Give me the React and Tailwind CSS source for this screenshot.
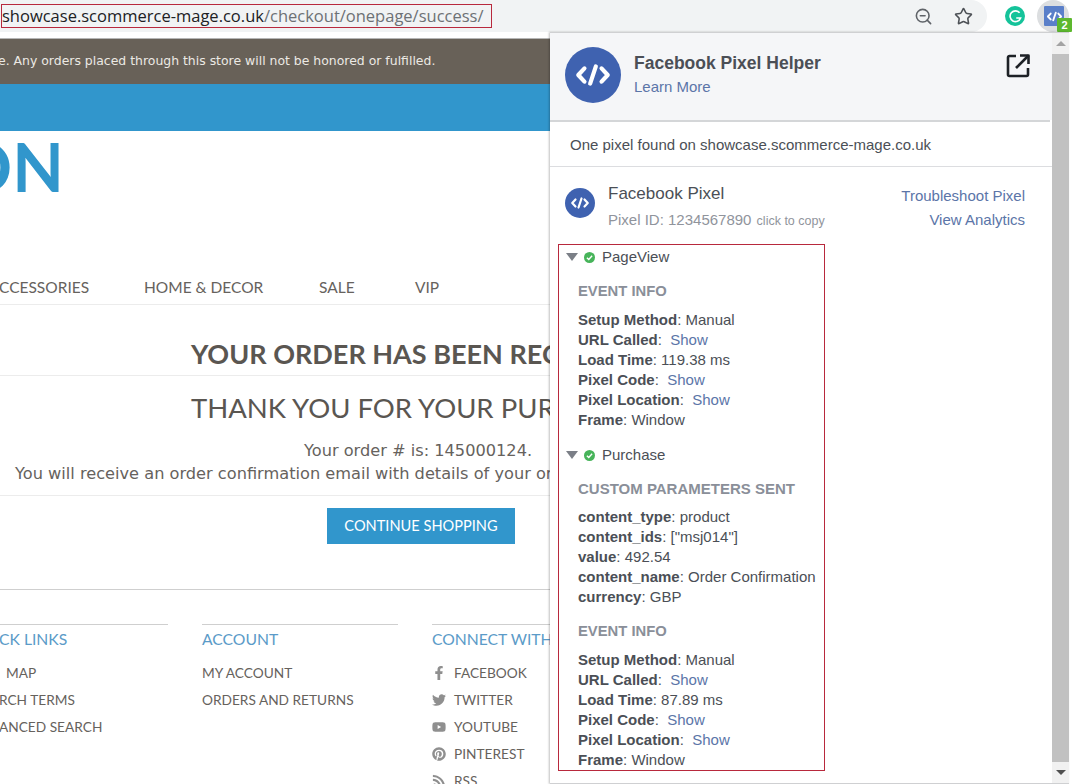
import { Star, ZoomOut } from 'lucide-react';
import { FaFacebookF, FaPinterest, FaRss, FaTwitter, FaYoutube } from 'react-icons/fa';

const HEAD = "font-['Lato',sans-serif]";
const BODY = "font-['DejaVu_Sans',sans-serif]";
const UI = "font-['Liberation_Sans',Arial,sans-serif]";

const SOCIAL = [
  { label: 'FACEBOOK', Icon: FaFacebookF },
  { label: 'TWITTER', Icon: FaTwitter },
  { label: 'YOUTUBE', Icon: FaYoutube },
  { label: 'PINTEREST', Icon: FaPinterest },
  { label: 'RSS', Icon: FaRss },
];

function CodeMark({ className }) {
  return (
    <svg viewBox="0 0 40 40" className={className} fill="none" stroke="white" strokeWidth="4.4" strokeLinecap="round" strokeLinejoin="round">
      <path d="M11 13 L4.5 20 L11 27" />
      <path d="M29 13 L35.5 20 L29 27" />
      <path d="M23 11 L17 29" />
    </svg>
  );
}

function Row({ name, value, show }) {
  return (
    <div className="h-5 leading-5 whitespace-nowrap">
      <span className="font-bold">{name}</span>
      {show ? <span>:&nbsp; <span className="text-[#5b75a8]">Show</span></span> : <span>: {value}</span>}
    </div>
  );
}

function EventInfo({ time }) {
  return (
    <div>
      <h4 className="h-5 leading-5 text-[14.8px] font-bold text-[#8a8f99]">EVENT INFO</h4>
      <div className="mt-[9px]">
        <Row name="Setup Method" value="Manual" />
        <Row name="URL Called" show />
        <Row name="Load Time" value={time} />
        <Row name="Pixel Code" show />
        <Row name="Pixel Location" show />
        <Row name="Frame" value="Window" />
      </div>
    </div>
  );
}

function EventHead({ name }) {
  return (
    <div className="flex items-center h-5 leading-5">
      <span className="w-0 h-0 ml-[7px] border-x-[6.5px] border-x-transparent border-t-[8px] border-t-[#7b7f87]" />
      <span className="ml-[6px] w-[11px] h-[11px] rounded-full bg-[#47b45a] flex items-center justify-center">
        <svg viewBox="0 0 12 12" className="w-[9px] h-[9px]" fill="none" stroke="white" strokeWidth="1.8"><path d="M2.5 6.2 L5 8.6 L9.5 3.6" /></svg>
      </span>
      <span className="ml-[7px] text-[#4b4f56]">{name}</span>
    </div>
  );
}

function Toolbar() {
  return (
    <div className="h-8 bg-white flex items-center">
      <div className="w-[987px] h-8 bg-[#f1f3f4] rounded-r-[16px] flex items-center">
        <div className="ml-px h-6 w-[491px] border border-[#b8293d] flex items-center text-[16.5px] whitespace-nowrap font-['Open_Sans',sans-serif] leading-none">
          <span className="text-[#202124]">showcase.scommerce-mage.co.uk</span>
          <span className="text-[#6d7175]">/checkout/onepage/success/</span>
        </div>
        <div className="ml-auto mr-[14px] flex items-center gap-[21px]">
          <ZoomOut className="w-[19px] h-[19px] text-[#5f6368]" strokeWidth={2} />
          <Star className="w-[19px] h-[19px] text-[#4d5156]" strokeWidth={2} />
        </div>
      </div>
      <div className="ml-[18px] w-5 h-5 rounded-full bg-[#15c39a] flex items-center justify-center">
        <svg viewBox="0 0 20 20" className="w-[15px] h-[15px]" fill="none" stroke="white" strokeWidth="2.2"><path d="M15.5 5 A7.2 7.2 0 1 0 16.8 12 L11 12" /></svg>
      </div>
      <div className="ml-3 relative w-8 h-8 rounded-full bg-[#dcdee0] flex items-center justify-center">
        <div className="ml-[2px] w-5 h-5 bg-[#5a7fc9] rounded-[1px] flex items-center justify-center">
          <CodeMark className="w-[17px] h-[17px]" />
        </div>
        <span className={`absolute right-[-3px] bottom-0 w-[15px] h-[14px] bg-[#5db82e] text-white text-[11px] font-bold leading-[14px] text-center rounded-[1px] ${UI}`}>2</span>
      </div>
    </div>
  );
}

function StorePage() {
  return (
    <div className="w-[550px] overflow-hidden">
      <div className="h-[7px] bg-white border-b border-[#b5b5b5]" />
      <div className={`h-[45px] bg-[#686158] flex items-center whitespace-nowrap text-[12.45px] text-[#ece9e4] -ml-[2px] ${BODY}`}>
        e. Any orders placed through this store will not be honored or fulfilled.
      </div>
      <div className="h-[47px] bg-[#3196cc]" />
      <div className="h-[134px]">
        <div className={`-ml-[42px] mt-[5px] text-[#3196cc] text-[67px] font-bold leading-[60px] whitespace-nowrap ${HEAD}`}>ON</div>
      </div>
      <div className={`h-[35px] border-b border-[#ececec] flex whitespace-nowrap text-[#66625d] text-[15.5px] leading-[34px] ${HEAD}`}>
        <span className="-ml-[1px] w-[145px]">CCESSORIES</span>
        <span className="w-[175px]">HOME &amp; DECOR</span>
        <span className="w-[96px]">SALE</span>
        <span>VIP</span>
      </div>
      <div className={`h-[71px] border-b border-[#ececec] pl-[191px] pt-[32px] text-[#5a5651] text-[27px] font-bold leading-[34px] whitespace-nowrap ${HEAD}`}>YOUR ORDER HAS BEEN RECEIVED.</div>
      <div className={`h-[63px] pl-[191px] pt-[15px] text-[#5a5651] text-[27.5px] leading-[34px] whitespace-nowrap ${HEAD}`}>THANK YOU FOR YOUR PURCHASE!</div>
      <div className={`h-[57px] border-b border-[#ececec] text-[#66625d] text-[16.2px] leading-[23px] whitespace-nowrap ${BODY}`}>
        <div className="pl-[304px]">Your order # is: 145000124.</div>
        <div className="pl-[15px]">You will receive an order confirmation email with details of your order</div>
      </div>
      <div className={`mt-[12px] ml-[327px] w-[188px] h-[36px] bg-[#3196cc] text-white text-[14.6px] flex items-center justify-center whitespace-nowrap ${HEAD}`}>CONTINUE SHOPPING</div>
      <div className="mt-[45px] border-t border-[#cfcfcf]" />
      <div className={`mt-[34px] flex whitespace-nowrap ${HEAD}`}>
        <div className="-ml-[1px] w-[169px] mr-[34px]">
          <div className="border-t border-[#cfcfcf] h-[30px] leading-[28px] text-[#5b9bc8] text-[15.7px] overflow-hidden">CK LINKS</div>
          <FooterLinks items={['  MAP', 'RCH TERMS', 'ANCED SEARCH']} />
        </div>
        <div className="w-[196px] mr-[34px]">
          <div className="border-t border-[#cfcfcf] h-[30px] leading-[28px] text-[#5b9bc8] text-[15.7px]">ACCOUNT</div>
          <FooterLinks items={['MY ACCOUNT', 'ORDERS AND RETURNS']} />
        </div>
        <div className="flex-1 overflow-hidden">
          <div className="border-t border-[#cfcfcf] h-[30px] leading-[28px] text-[#5b9bc8] text-[15.7px]">CONNECT WITH US</div>
          <div className="mt-[5px] text-[#66625d] text-[13.7px]">
            {SOCIAL.map(({ label, Icon }) => (
              <div key={label} className="h-[27px] leading-[27px] flex items-center">
                <span className="w-[22px] text-[#8f8f8f]"><Icon className="w-[14px] h-[14px]" /></span>
                {label}
              </div>
            ))}
          </div>
        </div>
      </div>
    </div>
  );
}

function FooterLinks({ items }) {
  return (
    <div className="mt-[5px] text-[#66625d] text-[13.7px]">
      {items.map((item) => (
        <div key={item} className="h-[27px] leading-[27px] whitespace-pre">{item}</div>
      ))}
    </div>
  );
}

function PixelPopup() {
  return (
    <div className={`absolute left-[550px] top-8 w-[519px] h-[752px] bg-white flex border-y border-[#cfd0d2] shadow-[-1px_0_2px_rgba(0,0,0,0.25)] text-[15px] text-[#4b4f56] ${UI}`}>
      <div className="w-[502px] overflow-hidden">
        <div className="h-[87px] bg-[#f5f6f8] relative flex items-start">
          <div className="ml-[15px] mt-[14px] w-14 h-14 rounded-full bg-[#3f62b0] flex items-center justify-center">
            <CodeMark className="w-[38px] h-[38px]" />
          </div>
          <div className="ml-[13px] mt-[19px]">
            <div className="text-[17.5px] font-bold leading-[22px] text-[#4b4f56]">Facebook Pixel Helper</div>
            <div className="text-[15px] leading-[22px] mt-[2px] text-[#5b75a8]">Learn More</div>
          </div>
          <svg viewBox="0 0 26 26" className="absolute right-[21px] top-[20px] w-[26px] h-[26px]" fill="none" stroke="#1d2126" strokeWidth="2.6" strokeLinejoin="round">
            <path d="M11 3 H4.5 A1.5 1.5 0 0 0 3 4.5 V21.5 A1.5 1.5 0 0 0 4.5 23 H21.5 A1.5 1.5 0 0 0 23 21.5 V15" />
            <path d="M15 2.5 H23.5 V11" />
            <path d="M23.5 2.5 L11 15" />
          </svg>
        </div>
        <div className="h-[2px] mr-[2px] bg-[#d4d6d8]" />
        <div className="h-[45px] border-b border-[#dcdde0] pl-5 leading-[46px] whitespace-nowrap">One pixel found on showcase.scommerce-mage.co.uk</div>
        <div className="h-[77px] relative flex">
          <div className="ml-[15px] mt-[21px] w-[30px] h-[30px] rounded-full bg-[#3f62b0] flex items-center justify-center">
            <CodeMark className="w-[20px] h-[20px]" />
          </div>
          <div className="ml-[13px] mt-4">
            <div className="text-[17px] leading-[22px]">Facebook Pixel</div>
            <div className="mt-[5px] leading-5 text-[#90949c] whitespace-nowrap">Pixel ID: 1234567890 <span className="text-[12.5px] ml-[1px]">click to copy</span></div>
          </div>
          <div className="ml-auto mr-[27px] mt-[17px] text-right text-[#5b75a8] leading-6">
            <div>Troubleshoot Pixel</div>
            <div>View Analytics</div>
          </div>
        </div>
        <div className="ml-2 w-[267px] h-[527px] border border-[#b8293d] pt-[2px]">
          <EventHead name="PageView" />
          <div className="ml-[19px] mt-[14px]">
            <EventInfo time="119.38 ms" />
          </div>
          <div className="mt-[15px]"><EventHead name="Purchase" /></div>
          <div className="ml-[19px] mt-[14px]">
            <h4 className="h-5 leading-5 text-[15px] font-bold text-[#8a8f99]">CUSTOM PARAMETERS SENT</h4>
            <div className="mt-[8px]">
              <Row name="content_type" value="product" />
              <Row name="content_ids" value={'["msj014"]'} />
              <Row name="value" value="492.54" />
              <Row name="content_name" value="Order Confirmation" />
              <Row name="currency" value="GBP" />
            </div>
            <div className="mt-[14px]"><EventInfo time="87.89 ms" /></div>
          </div>
        </div>
      </div>
      <div className="w-[17px] bg-[#f1f1f1] flex flex-col items-center">
        <div className="h-[21px] flex items-center justify-center"><span className="w-0 h-0 border-x-[5px] border-x-transparent border-b-[5px] border-b-[#a3a3a3]" /></div>
        <div className="w-full flex-1 bg-[#c1c1c1]" />
        <div className="h-[21px] flex items-center justify-center"><span className="w-0 h-0 border-x-[5px] border-x-transparent border-t-[5px] border-t-[#505050]" /></div>
      </div>
    </div>
  );
}

export default function App() {
  return (
    <div className="relative w-[1072px] h-[784px] overflow-hidden bg-white">
      <Toolbar />
      <StorePage />
      <PixelPopup />
    </div>
  );
}
